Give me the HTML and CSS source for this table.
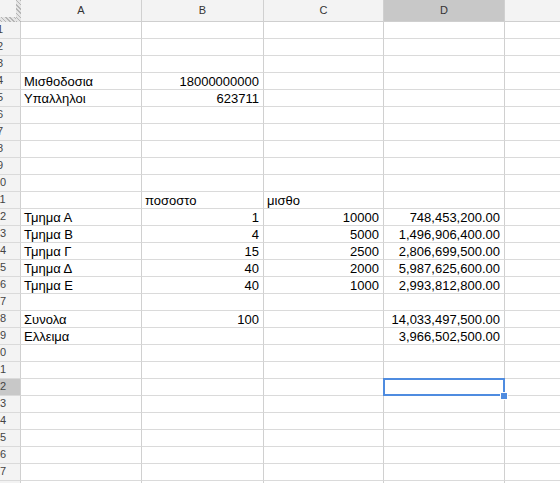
FILE: index.html
```html
<!DOCTYPE html>
<html lang="el">
<head>
<meta charset="utf-8">
<title>Sheet</title>
<link rel="stylesheet" href="styles.css">
</head>
<body>
<table class="sheet">
  <thead>
    <tr class="hrow">
      <th class="corner"></th>
      <th class="ch w-a">A</th>
      <th class="ch w-b">B</th>
      <th class="ch w-c">C</th>
      <th class="ch w-d sel-h">D</th>
      <th class="ch w-e"></th>
    </tr>
  </thead>
  <tbody>
    <tr><th class="rh">1</th><td></td><td></td><td></td><td></td><td></td></tr>
    <tr><th class="rh">2</th><td></td><td></td><td></td><td></td><td></td></tr>
    <tr><th class="rh">3</th><td></td><td></td><td></td><td></td><td></td></tr>
    <tr><th class="rh">4</th><td>Μισθοδοσια</td><td class="num">18000000000</td><td></td><td></td><td></td></tr>
    <tr><th class="rh">5</th><td>Υπαλληλοι</td><td class="num">623711</td><td></td><td></td><td></td></tr>
    <tr><th class="rh">6</th><td></td><td></td><td></td><td></td><td></td></tr>
    <tr><th class="rh">7</th><td></td><td></td><td></td><td></td><td></td></tr>
    <tr><th class="rh">8</th><td></td><td></td><td></td><td></td><td></td></tr>
    <tr><th class="rh">9</th><td></td><td></td><td></td><td></td><td></td></tr>
    <tr><th class="rh">10</th><td></td><td></td><td></td><td></td><td></td></tr>
    <tr><th class="rh">11</th><td></td><td>ποσοστο</td><td>μισθο</td><td></td><td></td></tr>
    <tr><th class="rh">12</th><td>Τμημα Α</td><td class="num">1</td><td class="num">10000</td><td class="num">748,453,200.00</td><td></td></tr>
    <tr><th class="rh">13</th><td>Τμημα Β</td><td class="num">4</td><td class="num">5000</td><td class="num">1,496,906,400.00</td><td></td></tr>
    <tr><th class="rh">14</th><td>Τμημα Γ</td><td class="num">15</td><td class="num">2500</td><td class="num">2,806,699,500.00</td><td></td></tr>
    <tr><th class="rh">15</th><td>Τμημα Δ</td><td class="num">40</td><td class="num">2000</td><td class="num">5,987,625,600.00</td><td></td></tr>
    <tr><th class="rh">16</th><td>Τμημα Ε</td><td class="num">40</td><td class="num">1000</td><td class="num">2,993,812,800.00</td><td></td></tr>
    <tr><th class="rh">17</th><td></td><td></td><td></td><td></td><td></td></tr>
    <tr><th class="rh">18</th><td>Συνολα</td><td class="num">100</td><td></td><td class="num">14,033,497,500.00</td><td></td></tr>
    <tr><th class="rh">19</th><td>Ελλειμα</td><td></td><td></td><td class="num">3,966,502,500.00</td><td></td></tr>
    <tr><th class="rh">20</th><td></td><td></td><td></td><td></td><td></td></tr>
    <tr><th class="rh">21</th><td></td><td></td><td></td><td></td><td></td></tr>
    <tr><th class="rh sel-h">22</th><td></td><td></td><td></td><td class="active"><div class="sel"><span class="handle"></span></div></td><td></td></tr>
    <tr><th class="rh">23</th><td></td><td></td><td></td><td></td><td></td></tr>
    <tr><th class="rh">24</th><td></td><td></td><td></td><td></td><td></td></tr>
    <tr><th class="rh">25</th><td></td><td></td><td></td><td></td><td></td></tr>
    <tr><th class="rh">26</th><td></td><td></td><td></td><td></td><td></td></tr>
    <tr><th class="rh">27</th><td></td><td></td><td></td><td></td><td></td></tr>
    <tr><th class="rh">28</th><td></td><td></td><td></td><td></td><td></td></tr>
  </tbody>
</table>
</body>
</html>
```

FILE: styles.css
```css
html, body {
  margin: 0;
  padding: 0;
  overflow: hidden;
  background: #fff;
  width: 560px;
  height: 483px;
}

.sheet {
  border-collapse: separate;
  border-spacing: 0;
  table-layout: fixed;
  width: 646px;
  margin-left: -20px;
  font-family: "Liberation Sans", Arial, sans-serif;
  color: #000;
}

.sheet th,
.sheet td {
  box-sizing: border-box;
  padding: 0;
  border-right: 1px solid #d0d0d0;
  border-bottom: 1px solid #dadada;
  white-space: nowrap;
  overflow: hidden;
}

.hrow th {
  height: 22px;
  background: #f3f3f3;
  font-size: 11px;
  font-weight: normal;
  color: #333;
  line-height: 19px;
  text-align: center;
  vertical-align: top;
  padding-top: 1px;
  border-bottom-color: #cfcfcf;
}

.corner {
  width: 41px;
  background:
    repeating-linear-gradient(45deg, #b5b5b5 0 1px, #e4e4e4 1px 3px) right top / 5px 100% no-repeat,
    repeating-linear-gradient(45deg, #b5b5b5 0 1px, #e4e4e4 1px 3px) left bottom / 100% 5px no-repeat,
    #f3f3f3 !important;
  border-right: none !important;
  border-bottom: none !important;
}

.w-a { width: 121px; }
.w-b { width: 122px; }
.w-c { width: 120px; }
.w-d { width: 121px; }
.w-e { width: 121px; }

.hrow .sel-h,
.rh.sel-h {
  background: #c8c8c8;
}

.rh {
  height: 17px;
  background: #f3f3f3;
  font-size: 11px;
  font-weight: normal;
  color: #444;
  text-align: center;
  line-height: 14px;
  padding: 1px 2px 0 0;
  vertical-align: top;
  border-right-color: #c8c8c8;
}

.sheet td {
  height: 17px;
  font-size: 13px;
  line-height: 14px;
  padding: 2px 4px 0 3px;
  vertical-align: top;
  text-align: left;
}

.sheet td.num {
  text-align: right;
}

.sheet td.active {
  position: relative;
  overflow: visible;
}

.sel {
  position: absolute;
  left: -1px;
  top: -1px;
  right: -1px;
  bottom: -1px;
  border: 2px solid #4f8ce0;
}

.handle {
  position: absolute;
  right: -4px;
  bottom: -5px;
  width: 6px;
  height: 6px;
  background: #4f8ce0;
  border: 1px solid #fff;
  box-sizing: content-box;
  margin: -1px;
}
```
